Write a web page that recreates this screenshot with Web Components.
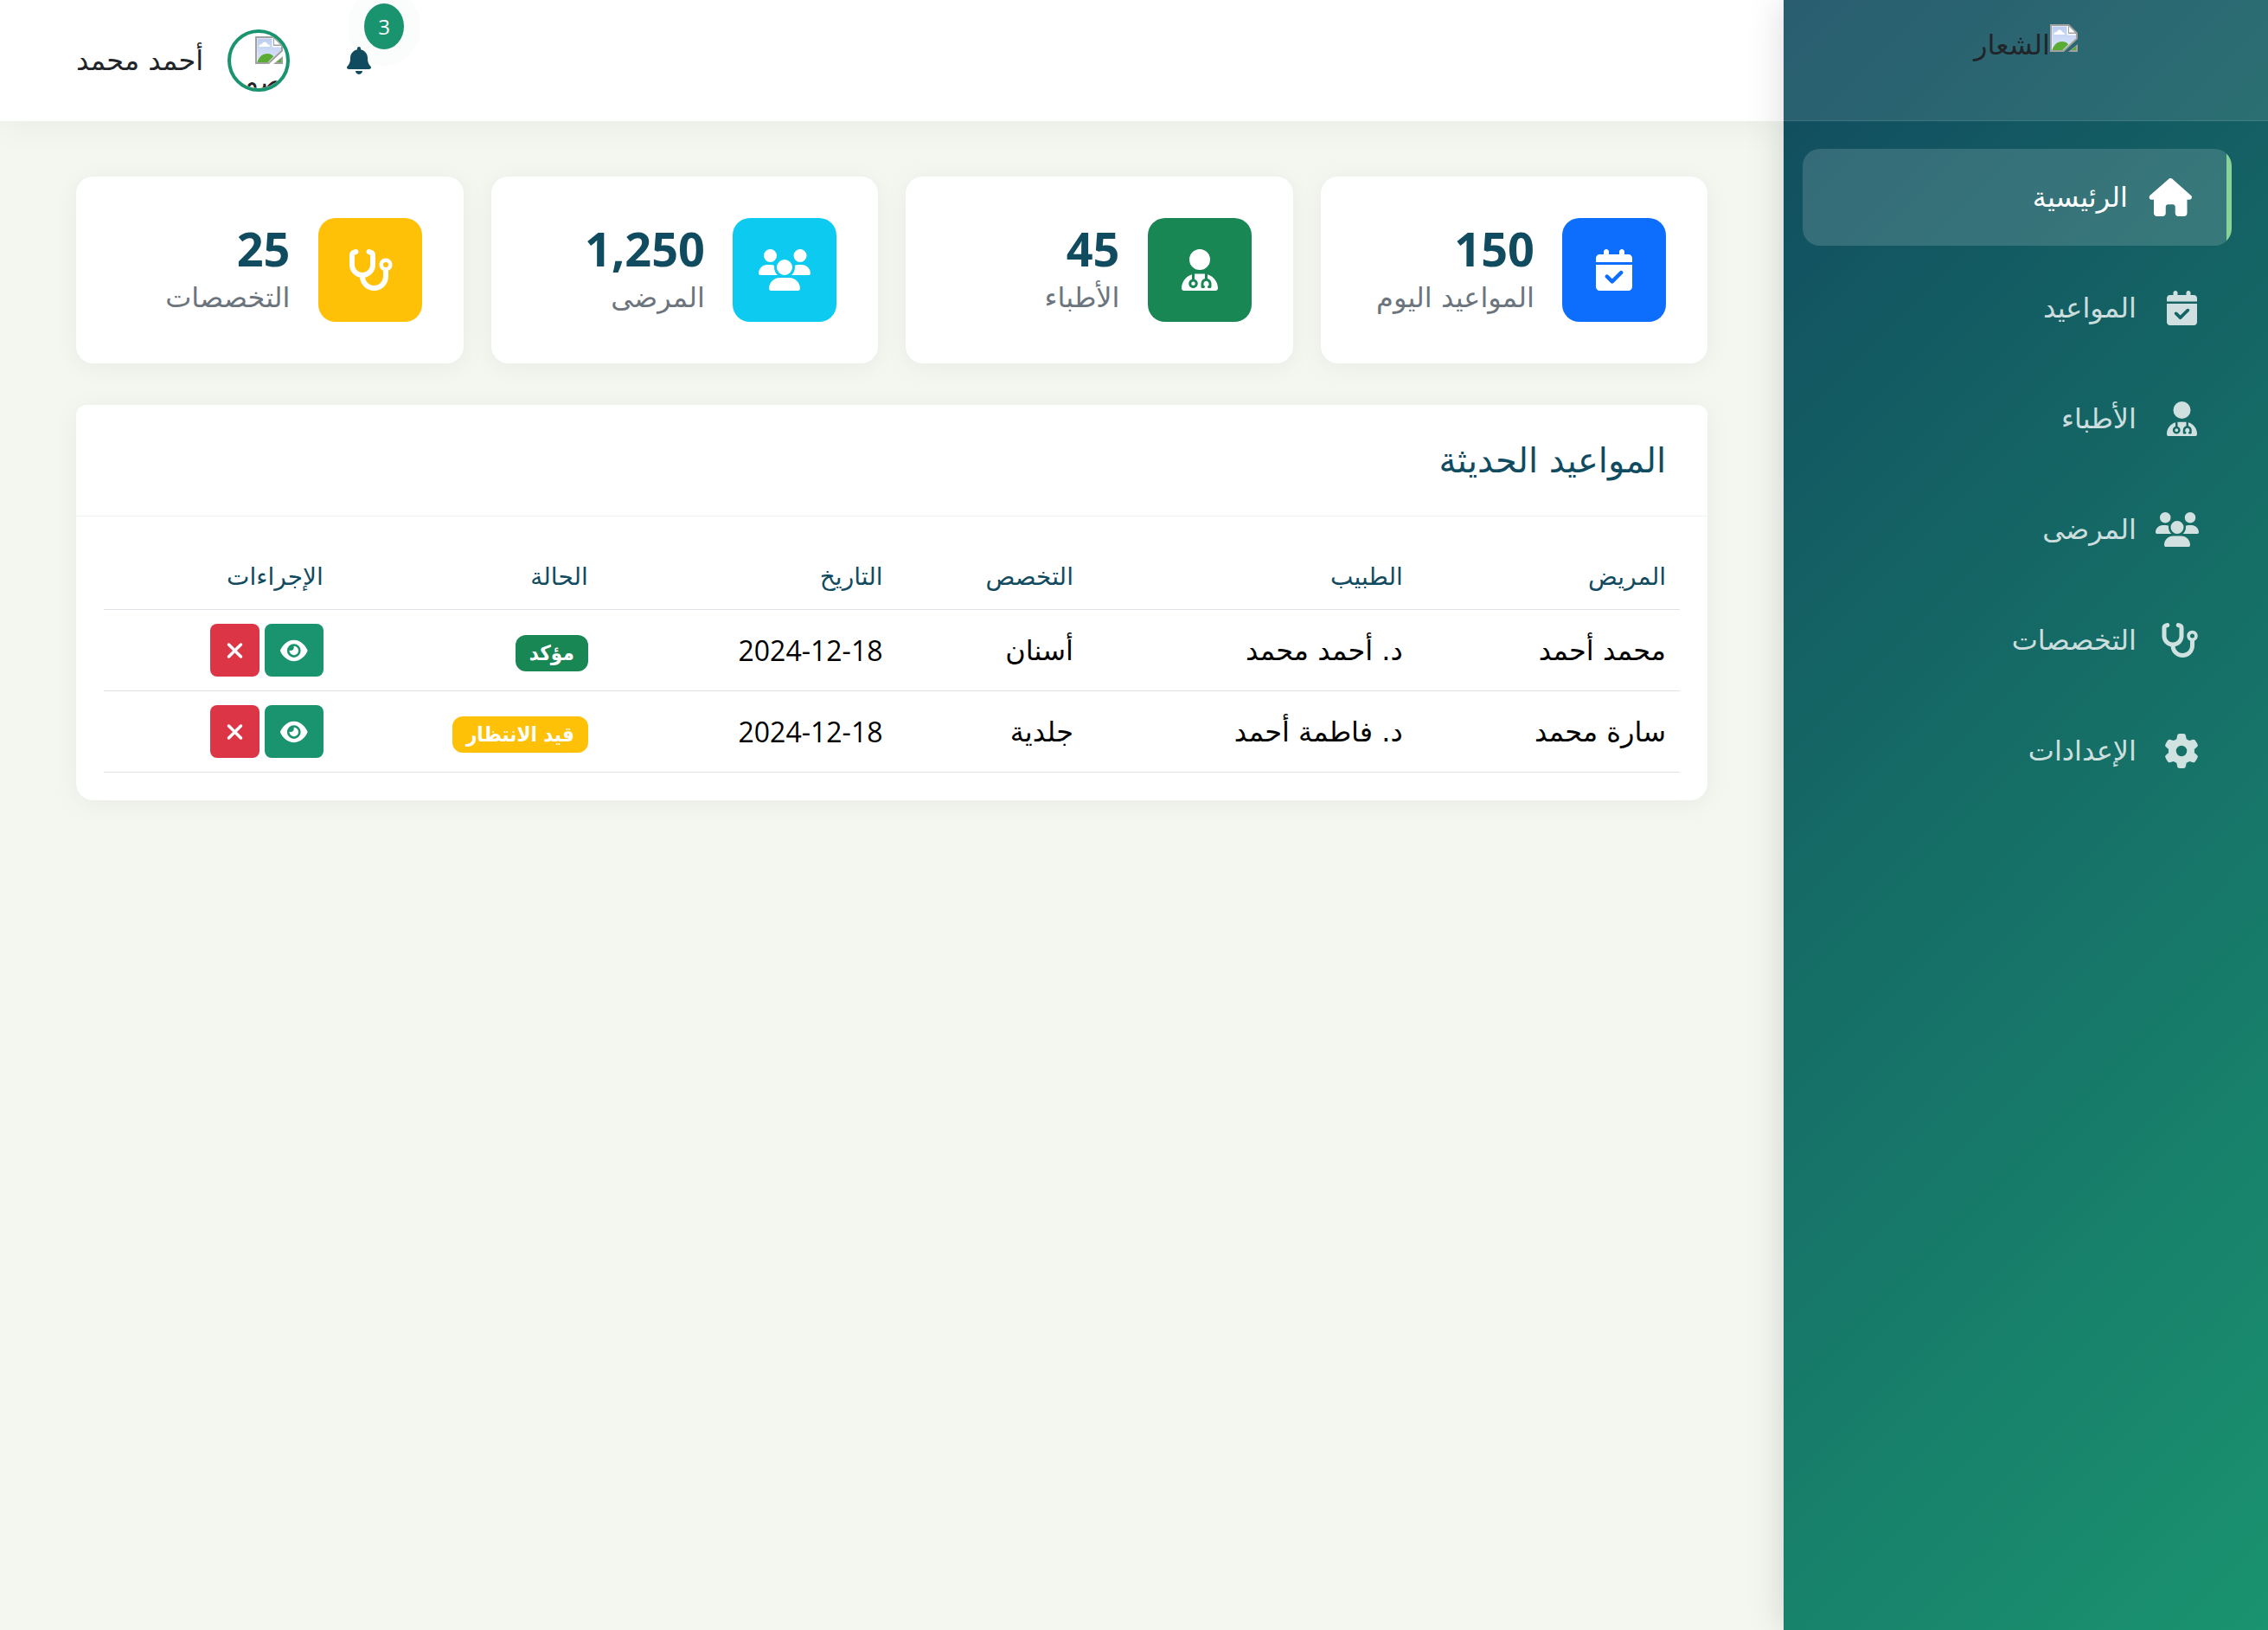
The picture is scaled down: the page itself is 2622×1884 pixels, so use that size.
<!DOCTYPE html>
<html lang="ar" dir="rtl">
<head>
<meta charset="utf-8">
<title>لوحة التحكم</title>
<style>
  :root {
    --primary: #114b5f;
    --secondary: #1a936f;
    --accent: #88d498;
    --surface: #f4f7f0;
    --digits: "Open Sans", "DejaVu Sans", sans-serif;
  }
  html, body { height: 100%; }
  body {
    margin: 0;
    background: var(--surface);
    color: #212529;
    font: 400 32px/48px "DejaVu Sans", "Open Sans", sans-serif;
  }
</style>
</head>
<body>
<app-shell>
  <side-bar slot="side">
    <nav-item icon="house" active>الرئيسية</nav-item>
    <nav-item icon="calendar">المواعيد</nav-item>
    <nav-item icon="doctor">الأطباء</nav-item>
    <nav-item icon="users">المرضى</nav-item>
    <nav-item icon="stethoscope">التخصصات</nav-item>
    <nav-item icon="gear">الإعدادات</nav-item>
  </side-bar>
  <top-bar count="3">أحمد محمد</top-bar>
  <stat-grid>
    <stat-card icon="calendar" value="150" style="--tone:#0d6efd">المواعيد اليوم</stat-card>
    <stat-card icon="doctor" value="45" style="--tone:#198754">الأطباء</stat-card>
    <stat-card icon="users" value="1,250" style="--tone:#0dcaf0">المرضى</stat-card>
    <stat-card icon="stethoscope" value="25" style="--tone:#ffc107">التخصصات</stat-card>
  </stat-grid>
  <panel-card>
    <span slot="title">المواعيد الحديثة</span>
    <appointments-table></appointments-table>
  </panel-card>
</app-shell>

<script>
const ICONS = {
  house: [576, "M575.8 255.5c0 18-15 32.1-32 32.1h-32l.7 160.2c0 2.7-.2 5.4-.5 8.1V472c0 22.1-17.9 40-40 40H456c-1.1 0-2.2 0-3.3-.1c-1.4 .1-2.8 .1-4.2 .1H416 392c-22.1 0-40-17.9-40-40V448 384c0-17.7-14.3-32-32-32H256c-17.7 0-32 14.3-32 32v64 24c0 22.1-17.9 40-40 40H160 128.1c-1.5 0-3-.1-4.5-.2c-1.2 .1-2.4 .2-3.6 .2H104c-22.1 0-40-17.9-40-40V360c0-.9 0-1.9 .1-2.8V287.6H32c-18 0-32-14-32-32.1c0-9 3-17 10-24L266.4 8c7-7 15-8 22-8s15 2 21 7L564.8 231.5c8 7 12 15 11 24z"],
  calendar: [448, "M128 0c17.7 0 32 14.3 32 32V64H288V32c0-17.7 14.3-32 32-32s32 14.3 32 32V64h48c26.5 0 48 21.5 48 48v48H0V112C0 85.5 21.5 64 48 64H96V32c0-17.7 14.3-32 32-32zM0 192H448V464c0 26.5-21.5 48-48 48H48c-26.5 0-48-21.5-48-48V192zM329 305c9.4-9.4 9.4-24.6 0-33.9s-24.6-9.4-33.9 0l-95 95-47-47c-9.4-9.4-24.6-9.4-33.9 0s-9.4 24.6 0 33.9l64 64c9.4 9.4 24.6 9.4 33.9 0L329 305z"],
  doctor: [448, "M224 256a128 128 0 1 0 0-256 128 128 0 1 0 0 256zm-96 55.2C54 332.9 0 401.3 0 482.3C0 498.7 13.3 512 29.7 512H418.3c16.4 0 29.7-13.3 29.7-29.7c0-81-54-149.4-128-171.1V362c27.6 7.1 48 32.2 48 62v40c0 8.8-7.2 16-16 16H336c-8.8 0-16-7.2-16-16s7.2-16 16-16V424c0-17.7-14.3-32-32-32s-32 14.3-32 32v24c8.8 0 16 7.2 16 16s-7.2 16-16 16H256c-8.8 0-16-7.2-16-16V424c0-29.8 20.4-54.9 48-62V304.9c-6-.6-12.1-.9-18.3-.9H178.3c-6.2 0-12.3 .3-18.3 .9v65.4c23.1 6.9 40 28.3 40 53.7c0 30.9-25.1 56-56 56s-56-25.1-56-56c0-25.4 16.9-46.8 40-53.7V311.2zM144 448a24 24 0 1 0 0-48 24 24 0 1 0 0 48z"],
  users: [640, "M144 0a80 80 0 1 1 0 160A80 80 0 1 1 144 0zM512 0a80 80 0 1 1 0 160A80 80 0 1 1 512 0zM0 298.7C0 239.8 47.8 192 106.7 192h42.7c15.9 0 31 3.5 44.6 9.7c-1.3 7.2-1.9 14.7-1.9 22.3c0 38.2 16.8 72.5 43.3 96c-.2 0-.4 0-.7 0H21.3C9.6 320 0 310.4 0 298.7zM405.3 320c-.2 0-.4 0-.7 0c26.6-23.5 43.3-57.8 43.3-96c0-7.6-.7-15-1.9-22.3c13.6-6.3 28.7-9.7 44.6-9.7h42.7C592.2 192 640 239.8 640 298.7c0 11.8-9.6 21.3-21.3 21.3H405.3zM224 224a96 96 0 1 1 192 0 96 96 0 1 1-192 0zM128 485.3C128 411.7 187.7 352 261.3 352H378.7C452.3 352 512 411.7 512 485.3c0 14.7-11.9 26.7-26.7 26.7H154.7c-14.7 0-26.7-11.9-26.7-26.7z"],
  stethoscope: [576, "M142.4 21.9c5.6 16.8-3.5 34.9-20.2 40.5L96 71.1V192c0 53 43 96 96 96s96-43 96-96V71.1l-26.1-8.7c-16.8-5.6-25.8-23.7-20.2-40.5s23.7-25.8 40.5-20.2l26.1 8.7C334.4 19.1 352 43.5 352 71.1V192c0 77.2-54.6 141.6-127.3 156.7C231 404.6 278.4 448 336 448c61.9 0 112-50.1 112-112V265.3c-28.3-12.3-48-40.5-48-73.3c0-44.2 35.8-80 80-80s80 35.8 80 80c0 32.8-19.7 61-48 73.3V336c0 97.2-78.8 176-176 176c-92.9 0-168.9-71.9-175.5-163.1C87.2 334.2 32 269.6 32 192V71.1c0-27.5 17.6-52 43.8-60.7l26.1-8.7c16.8-5.6 34.9 3.5 40.5 20.2zM480 224a32 32 0 1 0 0-64 32 32 0 1 0 0 64z"],
  gear: [512, "M495.9 166.6c3.2 8.7 .5 18.4-6.4 24.6l-43.3 39.4c1.1 8.3 1.7 16.8 1.7 25.4s-.6 17.1-1.7 25.4l43.3 39.4c6.9 6.2 9.6 15.9 6.4 24.6c-4.4 11.9-9.7 23.3-15.8 34.3l-4.7 8.1c-6.6 11-14 21.4-22.1 31.2c-5.9 7.2-15.7 9.6-24.5 6.8l-55.7-17.7c-13.4 10.3-28.2 18.9-44 25.4l-12.5 57.1c-2 9.1-9 16.3-18.2 17.8c-13.8 2.3-28 3.5-42.5 3.5s-28.7-1.2-42.5-3.5c-9.2-1.5-16.2-8.7-18.2-17.8l-12.5-57.1c-15.8-6.5-30.6-15.1-44-25.4L83.1 425.9c-8.8 2.8-18.6 .3-24.5-6.8c-8.1-9.8-15.5-20.2-22.1-31.2l-4.7-8.1c-6.1-11-11.4-22.4-15.8-34.3c-3.2-8.7-.5-18.4 6.4-24.6l43.3-39.4C64.6 273.1 64 264.6 64 256s.6-17.1 1.7-25.4L22.4 191.2c-6.9-6.2-9.6-15.9-6.4-24.6c4.4-11.9 9.7-23.3 15.8-34.3l4.7-8.1c6.6-11 14-21.4 22.1-31.2c5.9-7.2 15.7-9.6 24.5-6.8l55.7 17.7c13.4-10.3 28.2-18.9 44-25.4l12.5-57.1c2-9.1 9-16.3 18.2-17.8C227.3 1.2 241.5 0 256 0s28.7 1.2 42.5 3.5c9.2 1.5 16.2 8.7 18.2 17.8l12.5 57.1c15.8 6.5 30.6 15.1 44 25.4l55.7-17.7c8.8-2.8 18.6-.3 24.5 6.8c8.1 9.8 15.5 20.2 22.1 31.2l4.7 8.1c6.1 11 11.4 22.4 15.8 34.3zM256 336a80 80 0 1 0 0-160 80 80 0 1 0 0 160z"],
  bell: [448, "M224 0c-17.7 0-32 14.3-32 32V51.2C119 66 64 130.6 64 208v18.8c0 47-17.3 92.4-48.5 127.6l-7.4 8.3c-8.4 9.4-10.4 22.9-5.3 34.4S19.4 416 32 416H416c12.6 0 24-7.4 29.2-18.9s3.1-25-5.3-34.4l-7.4-8.3C401.3 319.2 384 273.9 384 226.8V208c0-77.4-55-142-128-156.8V32c0-17.7-14.3-32-32-32zm45.3 493.3c12-12 18.7-28.3 18.7-45.3H224 160c0 17 6.7 33.3 18.7 45.3s28.3 18.7 45.3 18.7s33.3-6.7 45.3-18.7z"],
  eye: [576, "M288 32c-80.8 0-145.5 36.8-192.6 80.6C48.6 156 17.3 208 2.5 243.7c-3.3 7.9-3.3 16.7 0 24.6C17.3 304 48.6 356 95.4 399.4C142.5 443.2 207.2 480 288 480s145.5-36.8 192.6-80.6c46.8-43.5 78.1-95.4 93-131.1c3.3-7.9 3.3-16.7 0-24.6c-14.9-35.7-46.2-87.7-93-131.1C433.5 68.8 368.8 32 288 32zM144 256a144 144 0 1 1 288 0 144 144 0 1 1-288 0zm144-64c0 35.3-28.7 64-64 64c-7.1 0-13.9-1.2-20.3-3.3c-5.5-1.8-11.9 1.6-11.7 7.4c.3 6.9 1.3 13.8 3.2 20.7c13.7 51.2 66.4 81.6 117.6 67.9s81.6-66.4 67.9-117.6c-11.1-41.5-47.8-69.4-88.6-71.1c-5.8-.2-9.2 6.1-7.4 11.7c2.1 6.4 3.3 13.2 3.3 20.3z"],
  xmark: [384, "M342.6 150.6c12.5-12.5 12.5-32.8 0-45.3s-32.8-12.5-45.3 0L192 210.7 86.6 105.4c-12.5-12.5-32.8-12.5-45.3 0s-12.5 32.8 0 45.3L146.7 256 41.4 361.4c-12.5 12.5-12.5 32.8 0 45.3s32.8 12.5 45.3 0L192 301.3 297.4 406.6c12.5 12.5 32.8 12.5 45.3 0s12.5-32.8 0-45.3L237.3 256 342.6 150.6z"]
};

/* Registers an element whose shadow root is filled by render(host). */
function define(name, render) {
  customElements.define(name, class extends HTMLElement {
    constructor() {
      super();
      this.attachShadow({ mode: "open" });
    }
    connectedCallback() {
      this.shadowRoot.innerHTML = render(this);
    }
  });
}

/* The em size of an icon is its height; the width follows the glyph. */
define("app-icon", host => {
  const [width, path] = ICONS[host.getAttribute("name")];
  return `
    <style>
      :host { display: inline-flex; flex: none; }
      svg { height: 1em; display: block; flex: none; fill: currentColor; }
    </style>
    <svg viewBox="0 0 ${width} 512" aria-hidden="true"><path d="${path}"/></svg>`;
});

define("missing-image", () => `
  <style>
    :host { display: inline-block; width: 32px; height: 32px; flex: none; }
    svg { display: block; }
  </style>
  <svg viewBox="0 0 16 16" width="32" height="32" aria-hidden="true">
    <defs><linearGradient id="sky" x1="0" y1="0" x2="0" y2="1">
      <stop offset="0" stop-color="#bccdf0"/><stop offset="1" stop-color="#dbe6fa"/>
    </linearGradient></defs>
    <path d="M0 0h11l5 5v3.500L8 16H0z" fill="#a0a0a0"/>
    <path d="M16 11.500V16h-5.500z" fill="#a0a0a0"/>
    <path d="M1 1h9.500v4.500H15v2.500L7.500 15H1z" fill="#fff"/>
    <path d="M1.200 1.200H9.800V6.200H15V8L7.300 15H1.200z" fill="url(#sky)"/>
    <path d="M2.200 6c0-1.200 1-1.600 1.700-1.400.5-1.800 2.700-1.800 3.200 0 1 0 1.400.7 1.400 1.400z" fill="#fff"/>
    <path d="M1.200 15c.8-3 3-5 5.800-5 1.600 0 2.600.6 3.600 1.600L7.300 15z" fill="#5aac35"/>
    <path d="M15 12.800V15h-2.600z" fill="#5aac35"/>
    <path d="M11 1.400v3.400h3.400z" fill="#fff"/>
  </svg>`);

define("app-shell", () => `
  <style>
    :host { display: flex; align-items: stretch; min-height: 100vh; }
    .side { flex: none; width: 560px; display: flex; position: relative; z-index: 1; }
    .main { flex: 1; min-width: 0; display: flex; flex-direction: column; }
    ::slotted(side-bar) { flex: 1; }
  </style>
  <div class="side"><slot name="side"></slot></div>
  <main class="main"><slot></slot></main>`);

define("side-bar", () => `
  <style>
    :host {
      display: block;
      background: linear-gradient(135deg, var(--primary), var(--secondary));
      box-shadow: 0 0 40px rgba(0, 0, 0, .15);
    }
    .brand {
      box-sizing: border-box;
      height: 140px;
      padding: 28px 32px;
      display: flex;
      justify-content: center;
      align-items: flex-start;
      background: rgba(255, 255, 255, .1);
      border-bottom: 1px solid rgba(255, 255, 255, .1);
    }
    nav {
      display: flex;
      flex-direction: column;
      gap: 16px;
      padding: 32px;
    }
  </style>
  <div class="brand"><missing-image></missing-image><span>الشعار</span></div>
  <nav><slot></slot></nav>`);

define("nav-item", host => `
  <style>
    :host { display: block; }
    a {
      box-sizing: border-box;
      height: 112px;
      padding: 0 48px;
      display: flex;
      align-items: center;
      gap: 32px;
      border-radius: 20px;
      color: rgba(255, 255, 255, .8);
      text-decoration: none;
    }
    app-icon {
      width: 40px;
      font-size: 40px;
      justify-content: safe center;
    }
    :host([active]) a {
      color: #fff;
      background: linear-gradient(to left, var(--accent) 6px, rgba(255, 255, 255, .15) 6px);
      transform: translateX(-10px);
    }
    :host([active]) app-icon { transform: scale(1.1); }
  </style>
  <a href="#"><app-icon name="${host.getAttribute("icon")}"></app-icon><slot></slot></a>`);

define("top-bar", host => `
  <style>
    :host {
      box-sizing: border-box;
      height: 140px;
      padding: 0 88px;
      display: flex;
      align-items: center;
      justify-content: flex-end;
      gap: 48px;
      background: #fff;
      box-shadow: 0 4px 40px rgba(0, 0, 0, .05);
    }
    button {
      position: relative;
      display: flex;
      padding: 16px 18px;
      border: 0;
      background: none;
      color: var(--primary);
      font: inherit;
      font-size: 32px;
    }
    .count {
      position: absolute;
      top: -34px;
      left: 38px;
      width: 46px;
      height: 53px;
      border-radius: 50%;
      background: var(--secondary);
      box-shadow: 0 0 0 19px rgba(26, 147, 111, .02);
      color: #fff;
      font-family: var(--digits);
      font-size: 24px;
      line-height: 53px;
      text-align: center;
    }
    .user { display: flex; align-items: center; gap: 28px; }
    .avatar {
      box-sizing: border-box;
      width: 72px;
      height: 72px;
      border: 4px solid var(--secondary);
      border-radius: 50%;
      overflow: hidden;
      display: flex;
      flex-direction: column;
      align-items: flex-start;
      padding: 4px;
    }
    .alt { flex: none; line-height: 40px; }
  </style>
  <button type="button" aria-label="notifications">
    <app-icon name="bell"></app-icon>
    <span class="count">${host.getAttribute("count")}</span>
  </button>
  <div class="user">
    <div class="avatar"><missing-image></missing-image><span class="alt">صورة</span></div>
    <span><slot></slot></span>
  </div>`);

define("stat-grid", () => `
  <style>
    :host {
      display: grid;
      grid-template-columns: repeat(4, 1fr);
      gap: 32px;
      padding: 64px 88px 48px;
    }
  </style>
  <slot></slot>`);

define("stat-card", host => `
  <style>
    :host {
      display: flex;
      align-items: center;
      gap: 32px;
      padding: 48px;
      border-radius: 20px;
      background: #fff;
      box-shadow: 0 4px 30px rgba(0, 0, 0, .05);
    }
    .tile {
      flex: none;
      width: 120px;
      height: 120px;
      display: flex;
      align-items: center;
      justify-content: center;
      border-radius: 20px;
      background: var(--tone);
      color: #fff;
      font-size: 48px;
    }
    .value {
      font-family: var(--digits);
      font-size: 54px;
      font-weight: 700;
      line-height: 64px;
      color: var(--primary);
    }
    .label { color: #6c757d; line-height: 50px; }
  </style>
  <div class="tile"><app-icon name="${host.getAttribute("icon")}"></app-icon></div>
  <div>
    <div class="value">${host.getAttribute("value")}</div>
    <div class="label"><slot></slot></div>
  </div>`);

define("panel-card", () => `
  <style>
    :host {
      display: block;
      margin: 0 88px 64px;
      border-radius: 12px 12px 20px 20px;
      background: #fff;
      box-shadow: 0 4px 30px rgba(0, 0, 0, .05);
    }
    h2 {
      margin: 0;
      padding: 40px 48px;
      border-bottom: 1px solid rgba(0, 0, 0, .05);
      font-size: 40px;
      font-weight: 400;
      line-height: 48px;
      color: var(--primary);
    }
    .body { padding: 32px; }
  </style>
  <h2><slot name="title"></slot></h2>
  <div class="body"><slot></slot></div>`);

define("status-badge", () => `
  <style>
    :host {
      display: inline-block;
      padding: 6px 16px;
      border-radius: 12px;
      background: var(--tone);
      color: #fff;
      font-family: "DejaVu Sans Condensed", "DejaVu Sans", sans-serif;
      font-size: 24px;
      font-weight: 700;
      line-height: 30px;
    }
  </style>
  <slot></slot>`);

define("action-button", host => `
  <style>
    :host { display: flex; }
    button {
      height: 61px;
      padding: 0 18px;
      display: flex;
      align-items: center;
      border: 0;
      border-radius: 8px;
      background: var(--tone);
      color: #fff;
      font-size: 28px;
    }
  </style>
  <button type="button" aria-label="${host.getAttribute("label")}">
    <app-icon name="${host.getAttribute("icon")}"></app-icon>
  </button>`);

const APPOINTMENTS = [
  ["محمد أحمد", "د. أحمد محمد", "أسنان", "2024-12-18", "مؤكد", "#198754"],
  ["سارة محمد", "د. فاطمة أحمد", "جلدية", "2024-12-18", "قيد الانتظار", "#ffc107"]
];

define("appointments-table", () => `
  <style>
    :host { display: block; }
    table {
      width: 100%;
      table-layout: fixed;
      border-collapse: separate;
      border-spacing: 0;
      color: #000;
    }
    th, td {
      padding: 16px;
      border-bottom: 1px solid #dee2e6;
      text-align: start;
      vertical-align: middle;
      white-space: nowrap;
    }
    th {
      color: var(--primary);
      font-size: 28px;
      font-weight: 400;
      line-height: 43px;
    }
    td { height: 61px; line-height: 48px; }
    .date { font-family: var(--digits); }
    .actions { display: flex; gap: 6px; }
  </style>
  <table>
    <colgroup>
      <col style="width:16.7%"><col style="width:20.9%"><col style="width:12.1%">
      <col style="width:18.7%"><col style="width:16.8%"><col style="width:14.8%">
    </colgroup>
    <thead>
      <tr><th>المريض</th><th>الطبيب</th><th>التخصص</th><th>التاريخ</th><th>الحالة</th><th>الإجراءات</th></tr>
    </thead>
    <tbody>
      ${APPOINTMENTS.map(([patient, doctor, field, date, status, tone]) => `
      <tr>
        <td>${patient}</td><td>${doctor}</td><td>${field}</td><td class="date">${date}</td>
        <td><status-badge style="--tone:${tone}">${status}</status-badge></td>
        <td><div class="actions">
          <action-button icon="eye" label="view" style="--tone:#1a936f"></action-button>
          <action-button icon="xmark" label="cancel" style="--tone:#dc3545"></action-button>
        </div></td>
      </tr>`).join("")}
    </tbody>
  </table>`);
</script>
</body>
</html>
